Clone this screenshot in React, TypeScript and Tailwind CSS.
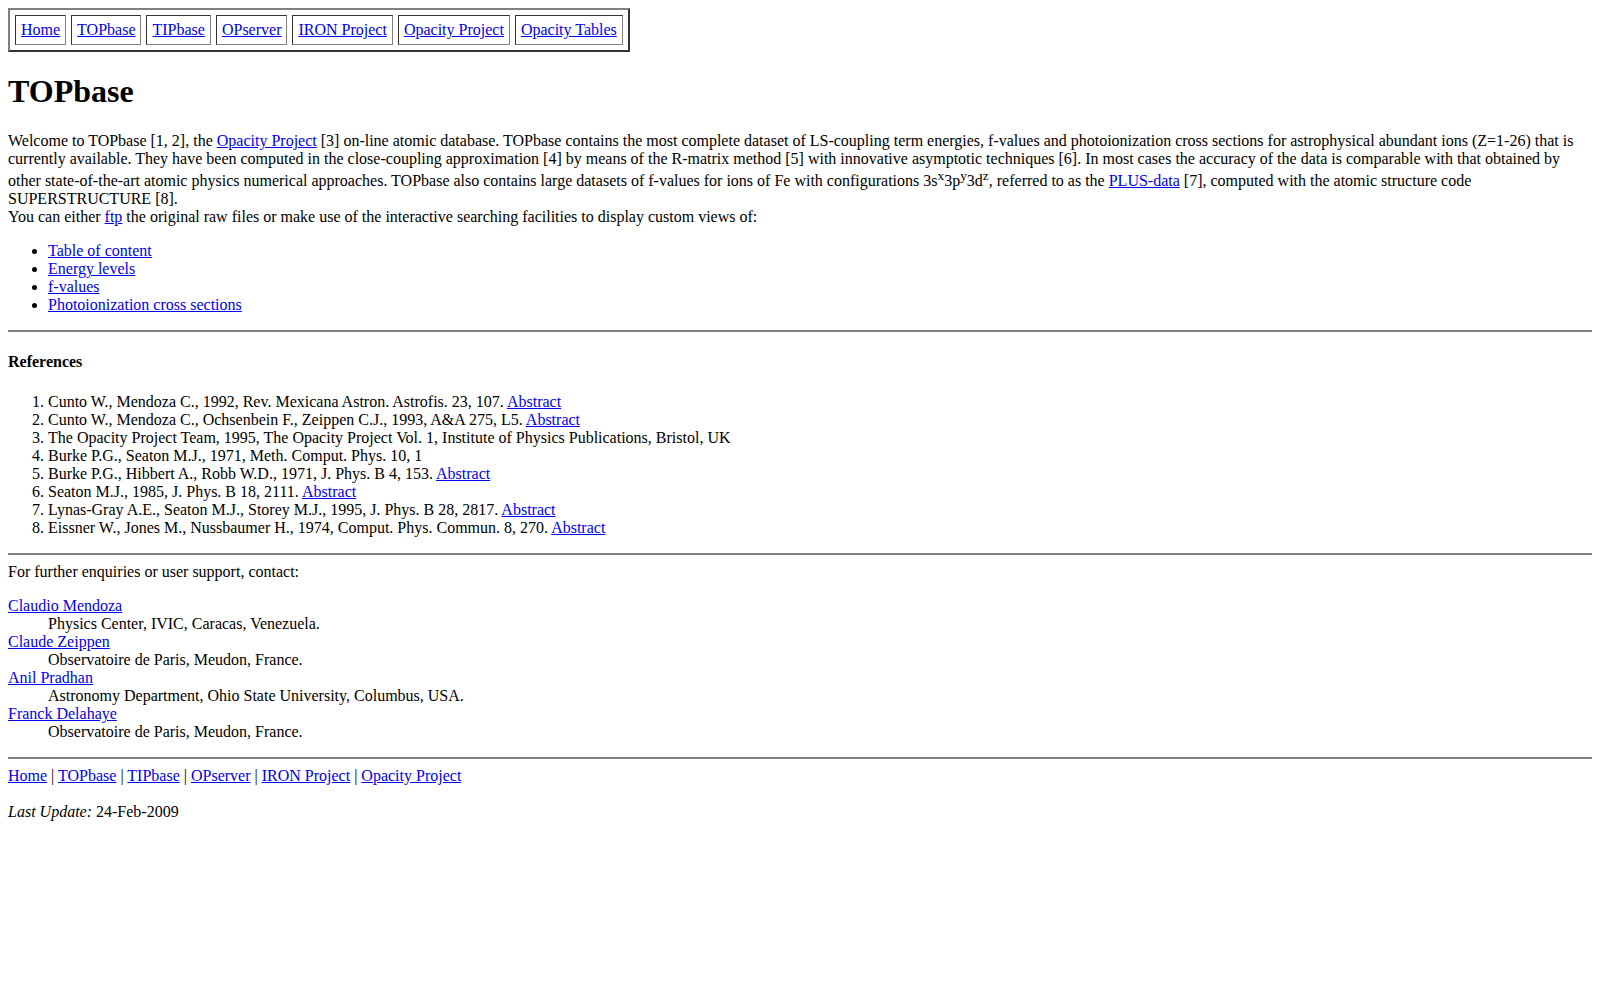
const navLinks = ["Home", "TOPbase", "TIPbase", "OPserver", "IRON Project", "Opacity Project", "Opacity Tables"];
const footerLinks = ["Home", "TOPbase", "TIPbase", "OPserver", "IRON Project", "Opacity Project"];

const views = ["Table of content", "Energy levels", "f-values", "Photoionization cross sections"];

const references: { text: string; abstract: boolean }[] = [
  { text: "Cunto W., Mendoza C., 1992, Rev. Mexicana Astron. Astrofis. 23, 107.", abstract: true },
  { text: "Cunto W., Mendoza C., Ochsenbein F., Zeippen C.J., 1993, A&A 275, L5.", abstract: true },
  { text: "The Opacity Project Team, 1995, The Opacity Project Vol. 1, Institute of Physics Publications, Bristol, UK", abstract: false },
  { text: "Burke P.G., Seaton M.J., 1971, Meth. Comput. Phys. 10, 1", abstract: false },
  { text: "Burke P.G., Hibbert A., Robb W.D., 1971, J. Phys. B 4, 153.", abstract: true },
  { text: "Seaton M.J., 1985, J. Phys. B 18, 2111.", abstract: true },
  { text: "Lynas-Gray A.E., Seaton M.J., Storey M.J., 1995, J. Phys. B 28, 2817.", abstract: true },
  { text: "Eissner W., Jones M., Nussbaumer H., 1974, Comput. Phys. Commun. 8, 270.", abstract: true },
];

const contacts = [
  { name: "Claudio Mendoza", place: "Physics Center, IVIC, Caracas, Venezuela." },
  { name: "Claude Zeippen", place: "Observatoire de Paris, Meudon, France." },
  { name: "Anil Pradhan", place: "Astronomy Department, Ohio State University, Columbus, USA." },
  { name: "Franck Delahaye", place: "Observatoire de Paris, Meudon, France." },
];

function A({ children }: { children: React.ReactNode }) {
  return (
    <a href="#" className="text-[#0000ee] underline">
      {children}
    </a>
  );
}

function Sup({ children }: { children: React.ReactNode }) {
  return <sup className="static align-super text-[13.33px] leading-[normal]">{children}</sup>;
}

function Rule() {
  return <hr className="my-2 h-0 border-0 border-t-2 border-[#808080]" />;
}

export default function App() {
  return (
    <div className="min-h-screen bg-white p-2 text-[16px] leading-[normal] text-black font-['Liberation_Serif','Times_New_Roman',serif]">
      <table className="border-separate border-spacing-[5px] border-2 border-t-[#808080] border-l-[#808080] border-r-[#333333] border-b-[#333333]">
        <tbody>
          <tr>
            {navLinks.map((l) => (
              <td
                key={l}
                className="p-[5px] border border-t-[#333333] border-l-[#333333] border-r-[#808080] border-b-[#808080]"
              >
                <A>{l}</A>
              </td>
            ))}
          </tr>
        </tbody>
      </table>

      <h1 className="my-[21.44px] text-[32px] font-bold">TOPbase</h1>

      <p className="my-4">
        Welcome to TOPbase [1, 2], the <A>Opacity Project</A> [3] on-line atomic database. TOPbase contains the most
        complete dataset of LS-coupling term energies, f-values and photoionization cross sections for astrophysical
        abundant ions (Z=1-26) that is currently available. They have been computed in the close-coupling approximation
        [4] by means of the R-matrix method [5] with innovative asymptotic techniques [6]. In most cases the accuracy of
        the data is comparable with that obtained by other state-of-the-art atomic physics numerical approaches. TOPbase
        also contains large datasets of f-values for ions of Fe with configurations 3s<Sup>x</Sup>3p<Sup>y</Sup>3d
        <Sup>z</Sup>, referred to as the <A>PLUS-data</A> [7], computed with the atomic structure code SUPERSTRUCTURE
        [8].
        <br />
        You can either <A>ftp</A> the original raw files or make use of the interactive searching facilities to display
        custom views of:
      </p>

      <ul className="my-4 list-disc pl-10">
        {views.map((v) => (
          <li key={v}>
            <A>{v}</A>
          </li>
        ))}
      </ul>

      <Rule />

      <h4 className="my-[21.28px] font-bold">References</h4>

      <ol className="my-4 list-decimal pl-10">
        {references.map((r, i) => (
          <li key={i}>
            {r.text}
            {r.abstract && (
              <>
                {" "}
                <A>Abstract</A>
              </>
            )}
          </li>
        ))}
      </ol>

      <Rule />

      For further enquiries or user support, contact:
      <dl className="my-4">
        {contacts.map((c) => (
          <div key={c.name}>
            <dt>
              <A>{c.name}</A>
            </dt>
            <dd className="ml-10">{c.place}</dd>
          </div>
        ))}
      </dl>

      <Rule />

      {footerLinks.map((l, i) => (
        <span key={l}>
          {i > 0 && " | "}
          <A>{l}</A>
        </span>
      ))}
      <br />
      <br />
      <i>Last Update:</i> 24-Feb-2009
    </div>
  );
}
